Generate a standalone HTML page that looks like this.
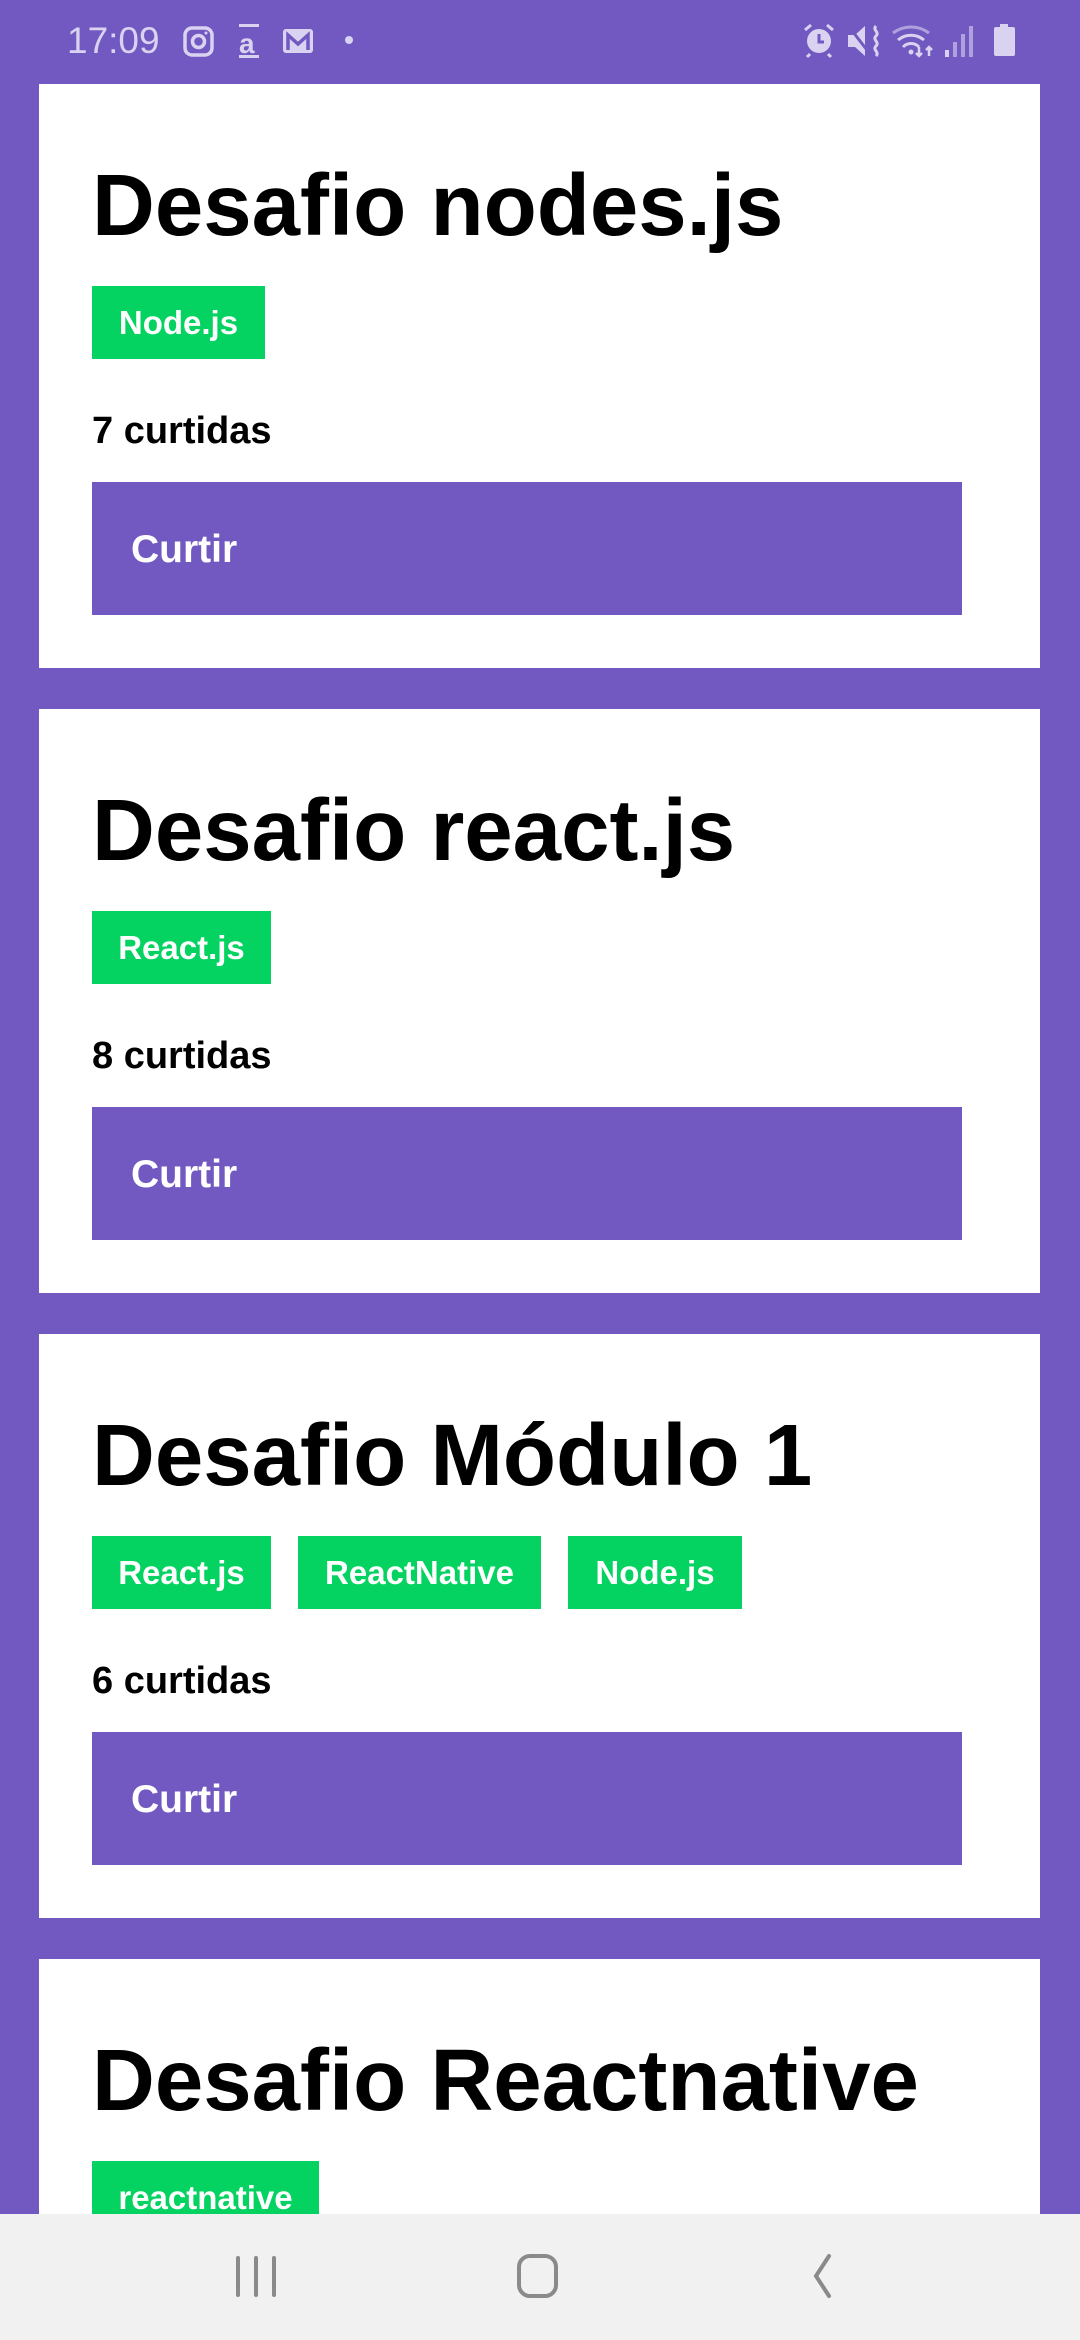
<!DOCTYPE html>
<html><head><meta charset="utf-8"><style>
*{margin:0;padding:0;box-sizing:border-box}
html,body{width:1080px;height:2340px;overflow:hidden;background:#7159c1;font-family:"Liberation Sans",Arial,sans-serif;position:relative}
.card{position:absolute;left:39px;width:1001px;height:584px;background:#fff}
.t{position:absolute;left:53px;top:78px;font-size:87px;font-weight:bold;line-height:87px;color:#000;white-space:nowrap;font-variant-ligatures:none}
.tags{position:absolute;left:53px;top:202px;height:73px;display:flex;gap:27px}
.tag{height:73px;line-height:73px;background:#04d361;color:#fff;font-weight:bold;font-size:33px;text-align:center}
.c{position:absolute;left:53px;top:328px;font-size:38px;font-weight:bold;line-height:38px;color:#000}
.b{position:absolute;left:53px;top:398px;width:870px;height:133px;background:#7159c1;color:#fff;font-weight:bold;font-size:39px;line-height:136px;padding-left:39px}
.status{position:absolute;left:0;top:0;width:1080px;height:84px;color:#d9d2f0}
.nav{position:absolute;left:0;top:2214px;width:1080px;height:126px;background:#f1f1f1}
</style></head><body>
<div class="status">
<div style="position:absolute;left:67px;top:21px;font-size:37px;line-height:40px">17:09</div>
<svg width="1080" height="84" style="position:absolute;left:0;top:0" fill="none" stroke="#d9d2f0">
<rect x="185" y="28" width="27" height="27" rx="7" stroke-width="3.5"/><circle cx="198.5" cy="41.5" r="6" stroke-width="3.5"/><circle cx="206" cy="33" r="1.5" fill="#d9d2f0" stroke="none"/>
<text x="239" y="53" font-size="28" font-weight="bold" fill="#d9d2f0" stroke="none" font-family="Liberation Sans">a</text>
<rect x="239" y="24" width="20" height="3" fill="#d9d2f0" stroke="none"/><rect x="239" y="55" width="20" height="3" fill="#d9d2f0" stroke="none"/>
<rect x="283" y="29" width="30" height="24" rx="3" fill="#d9d2f0" stroke="none"/><path d="M288 50V35l10 9 10-9v15" stroke="#7159c1" stroke-width="3.5"/>
<circle cx="349" cy="40" r="4" fill="#d9d2f0" stroke="none"/>
<circle cx="819" cy="41" r="12" fill="#d9d2f0" stroke="none"/><path d="M819 34v8h5" stroke="#7159c1" stroke-width="3"/><path d="M805 30l6-5M833 30l-6-5M810 54l-3 3M828 54l3 3" stroke-width="3"/>
<path d="M848 35h7l10-9v30l-10-9h-7z" fill="#d9d2f0" stroke="none"/><path d="M850 28l20 26" stroke="#7159c1" stroke-width="3"/><path d="M876 26c-4 4 4 6 0 10s4 6 0 10 4 6 0 10" stroke-width="3"/>
<path d="M893 33a30 30 0 0 1 36 0" stroke-width="3" opacity=".6"/><path d="M898 40a20 20 0 0 1 26 0M903 47a11 11 0 0 1 16 0" stroke-width="3"/><circle cx="911" cy="52" r="2.5" fill="#d9d2f0" stroke="none"/><path d="M919 47v9M916 53l3 3 3-3M929 56v-9M926 50l3-3 3 3" stroke-width="2.5"/>
<rect x="945" y="50" width="4" height="7" fill="#d9d2f0" stroke="none"/><rect x="953" y="42" width="4" height="15" fill="#d9d2f0" stroke="none" opacity=".6"/><rect x="961" y="34" width="4" height="23" fill="#d9d2f0" stroke="none" opacity=".6"/><rect x="969" y="26" width="4" height="31" fill="#d9d2f0" stroke="none" opacity=".6"/>
<rect x="1000" y="24" width="8" height="4" fill="#d9d2f0" stroke="none"/><rect x="994" y="27" width="21" height="29" rx="2" fill="#d9d2f0" stroke="none"/>
</svg>
</div>

<div class="card" style="top:84px">
<div class="t">Desafio nodes.js</div>
<div class="tags"><div class="tag" style="width:173px">Node.js</div></div>
<div class="c">7 curtidas</div>
<div class="b">Curtir</div>
</div>
<div class="card" style="top:709px">
<div class="t">Desafio react.js</div>
<div class="tags"><div class="tag" style="width:179px">React.js</div></div>
<div class="c">8 curtidas</div>
<div class="b">Curtir</div>
</div>
<div class="card" style="top:1334px">
<div class="t">Desafio Módulo 1</div>
<div class="tags"><div class="tag" style="width:179px">React.js</div><div class="tag" style="width:243px">ReactNative</div><div class="tag" style="width:174px">Node.js</div></div>
<div class="c">6 curtidas</div>
<div class="b">Curtir</div>
</div>
<div class="card" style="top:1959px;height:255px;overflow:hidden">
<div class="t">Desafio Reactnative</div>
<div class="tags"><div class="tag" style="width:227px">reactnative</div></div>
</div>

<div class="nav">
<svg width="1080" height="126" fill="none" stroke="#8a8a8a" stroke-width="4" stroke-linecap="round">
<path d="M238 44v37M256 44v37M274 44v37"/>
<rect x="519" y="42" width="37" height="40" rx="11"/>
<path d="M829 42l-13 20 13 20"/>
</svg>
</div>
</body></html>
